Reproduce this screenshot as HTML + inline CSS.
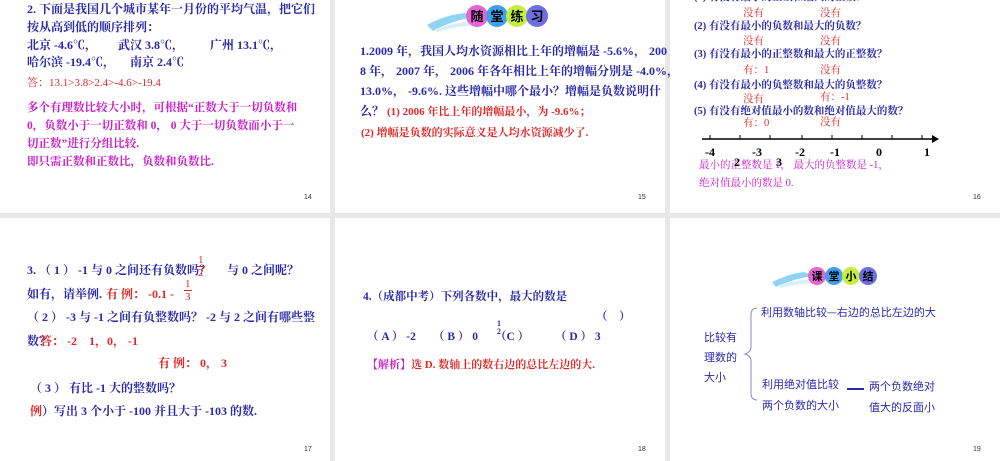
<!DOCTYPE html>
<html><head><meta charset="utf-8"><style>
body{margin:0;width:1000px;height:461px;background:#e8e8e8;position:relative;overflow:hidden;font-family:"Liberation Serif","Noto Serif CJK SC","Noto Sans CJK SC",serif}
.s{position:absolute;background:#fff}
.t{position:absolute;white-space:nowrap;font-size:12px;line-height:14px}
.b{color:#2a2aa8;font-weight:bold}.r{color:#e02828}.m{color:#c81ec8}
.n{position:absolute;font:7px "Liberation Sans",sans-serif;color:#333}
</style></head><body>
<div class="s" style="left:0;top:0;width:330px;height:213px"></div>
<div class="s" style="left:335px;top:0;width:330px;height:213px"></div>
<div class="s" style="left:670px;top:0;width:330px;height:213px"></div>
<div class="s" style="left:0;top:218px;width:330px;height:243px"></div>
<div class="s" style="left:335px;top:218px;width:330px;height:243px"></div>
<div class="s" style="left:670px;top:218px;width:330px;height:243px"></div>

<!-- slide 14 -->
<div class="t b" style="left:27px;top:2px">2. 下面是我国几个城市某年一月份的平均气温，把它们</div>
<div class="t b" style="left:27px;top:20px">按从高到低的顺序排列：</div>
<div class="t b" style="left:27px;top:38px">北京 -4.6℃，</div>
<div class="t b" style="left:118px;top:38px">武汉 3.8℃，</div>
<div class="t b" style="left:210px;top:38px">广州 13.1℃，</div>
<div class="t b" style="left:27px;top:55px">哈尔滨 -19.4℃，</div>
<div class="t b" style="left:130px;top:55px">南京 2.4℃</div>
<div class="t r" style="left:27px;top:76px;font-size:11px">答：13.1>3.8>2.4>-4.6>-19.4</div>
<div class="t m" style="left:27px;top:101px;font-size:11.5px;font-weight:bold">多个有理数比较大小时，可根据“正数大于一切负数和</div>
<div class="t m" style="left:27px;top:119px;font-size:11.5px;font-weight:bold">0，负数小于一切正数和 0， 0 大于一切负数而小于一</div>
<div class="t m" style="left:27px;top:137px;font-size:11.5px;font-weight:bold">切正数”进行分组比较.</div>
<div class="t m" style="left:27px;top:155px;font-size:11.5px;font-weight:bold">即只需正数和正数比，负数和负数比.</div>
<div class="n" style="left:304px;top:194px">14</div>

<!-- slide 15 -->
<svg style="position:absolute;left:425px;top:3px" width="140" height="30">
<path d="M2 22 Q20 12 40 10 L52 14 Q30 16 8 28Z" fill="#8fd4f0"/>
<path d="M10 26 Q35 18 55 18 L58 22 Q35 22 12 29Z" fill="#d8eef8"/>
<circle cx="52" cy="13" r="11" fill="#e565d5"/><circle cx="72" cy="13" r="11" fill="#3fa0ee"/>
<circle cx="92" cy="13" r="11" fill="#c6ee3c"/><circle cx="112" cy="13" r="11" fill="#6e6ee0"/>
<text x="52" y="18" font-size="13" font-weight="bold" text-anchor="middle" font-family="Noto Sans CJK SC">随</text>
<text x="72" y="18" font-size="13" font-weight="bold" text-anchor="middle" font-family="Noto Sans CJK SC">堂</text>
<text x="92" y="18" font-size="13" font-weight="bold" text-anchor="middle" font-family="Noto Sans CJK SC">练</text>
<text x="112" y="18" font-size="13" font-weight="bold" text-anchor="middle" font-family="Noto Sans CJK SC">习</text>
</svg>
<div class="t b" style="left:360px;top:44px">1.2009 年，我国人均水资源相比上年的增幅是 -5.6%， 200</div>
<div class="t b" style="left:360px;top:64px">8 年， 2007 年， 2006 年各年相比上年的增幅分别是 -4.0%，</div>
<div class="t b" style="left:360px;top:84px">13.0%， -9.6%. 这些增幅中哪个最小？增幅是负数说明什</div>
<div class="t b" style="left:360px;top:104px">么？ <span class="r" style="font-size:11px">(1) 2006 年比上年的增幅最小，为 -9.6%；</span></div>
<div class="t r" style="left:361px;top:126px;font-size:11px;font-weight:bold">(2) 增幅是负数的实际意义是人均水资源减少了.</div>
<div class="n" style="left:638px;top:194px">15</div>

<!-- slide 16 -->
<div class="t b" style="left:694px;top:-9px;font-size:10.5px">(1) 有没有最小的正数和最大的正数？</div>
<div class="t r" style="left:743px;top:7px;font-size:10.5px">没有</div><div class="t r" style="left:820px;top:7px;font-size:10.5px">没有</div>
<div class="t b" style="left:694px;top:20px;font-size:10.5px">(2) 有没有最小的负数和最大的负数？</div>
<div class="t r" style="left:743px;top:35px;font-size:10.5px">没有</div><div class="t r" style="left:820px;top:35px;font-size:10.5px">没有</div>
<div class="t b" style="left:694px;top:48px;font-size:10.5px">(3) 有没有最小的正整数和最大的正整数？</div>
<div class="t r" style="left:743px;top:64px;font-size:10.5px">有：1</div><div class="t r" style="left:820px;top:64px;font-size:10.5px">没有</div>
<div class="t b" style="left:694px;top:79px;font-size:10.5px">(4) 有没有最小的负整数和最大的负整数？</div>
<div class="t r" style="left:743px;top:93px;font-size:10.5px">没有</div><div class="t r" style="left:820px;top:91px;font-size:10.5px">有：-1</div>
<div class="t b" style="left:694px;top:105px;font-size:10.5px">(5) 有没有绝对值最小的数和绝对值最大的数？</div>
<div class="t r" style="left:743px;top:117px;font-size:10.5px">有：0</div><div class="t r" style="left:820px;top:116px;font-size:10.5px">没有</div>
<svg style="position:absolute;left:700px;top:132px" width="240" height="14">
<line x1="2" y1="7" x2="232" y2="7" stroke="#000" stroke-width="1.6"/>
<path d="M232 3 L239 7 L232 11Z" fill="#000"/>
<g stroke="#000" stroke-width="1"><line x1="10" y1="3" x2="10" y2="7"/><line x1="40" y1="3" x2="40" y2="7"/><line x1="70" y1="3" x2="70" y2="7"/><line x1="102" y1="3" x2="102" y2="7"/><line x1="132" y1="3" x2="132" y2="7"/><line x1="162" y1="3" x2="162" y2="7"/><line x1="192" y1="3" x2="192" y2="7"/><line x1="222" y1="3" x2="222" y2="7"/></g>
</svg>
<div class="t" style="left:705px;top:145px;font-weight:bold;font-size:12px">-4</div>
<div class="t" style="left:752px;top:145px;font-weight:bold;font-size:12px">-3</div>
<div class="t" style="left:795px;top:145px;font-weight:bold;font-size:12px">-2</div>
<div class="t" style="left:830px;top:145px;font-weight:bold;font-size:12px">-1</div>
<div class="t" style="left:876px;top:145px;font-weight:bold;font-size:12px">0</div>
<div class="t" style="left:924px;top:145px;font-weight:bold;font-size:12px">1</div>
<div class="t m" style="left:699px;top:159px;font-size:10.5px">最小的正整数是 1， 最大的负整数是 -1，</div>
<div class="t" style="left:734px;top:155px;font-size:12px;font-weight:bold">2</div>
<div class="t" style="left:776px;top:155px;font-size:12px;font-weight:bold">3</div>
<div class="t m" style="left:699px;top:177px;font-size:10.5px">绝对值最小的数是 0.</div>
<div class="n" style="left:973px;top:194px">16</div>

<!-- slide 17 -->
<div class="t b" style="left:27px;top:263px">3. （ 1 ） -1 与 0 之间还有负数吗？</div>
<div class="t r" style="left:198px;top:253px;font-size:11px">1</div>
<div style="position:absolute;left:197px;top:266px;width:8px;height:1px;background:#e02828"></div>
<div class="t r" style="left:198px;top:266px;font-size:11px">2</div>
<div class="t b" style="left:227px;top:263px">与 0 之间呢？</div>
<div class="t b" style="left:27px;top:287px">如有，请举例.</div>
<div class="t r" style="left:106px;top:287px;font-weight:bold">有 例： -0.1 -</div>
<div class="t r" style="left:185px;top:277px;font-size:11px">1</div>
<div style="position:absolute;left:184px;top:290px;width:8px;height:1px;background:#e02828"></div>
<div class="t r" style="left:185px;top:290px;font-size:11px">3</div>
<div class="t b" style="left:27px;top:310px">（ 2 ） -3 与 -1 之间有负整数吗？ -2 与 2 之间有哪些整</div>
<div class="t b" style="left:27px;top:334px">数？</div>
<div class="t r" style="left:40px;top:334px;font-weight:bold">答： -2 &nbsp;&nbsp;&nbsp;1，0， -1</div>
<div class="t r" style="left:158px;top:356px;font-weight:bold">有 例： 0， 3</div>
<div class="t b" style="left:30px;top:381px">（ 3 ） 有比 -1 大的整数吗？</div>
<div class="t b" style="left:30px;top:404px"><span class="r">例</span>）写出 3 个小于 -100 并且大于 -103 的数.</div>
<div class="n" style="left:304px;top:446px">17</div>

<!-- slide 18 -->
<div class="t b" style="left:363px;top:290px;font-size:11.5px">4.（成都中考）下列各数中，最大的数是</div>
<div class="t b" style="left:596px;top:310px;font-size:11.5px">（ &nbsp;&nbsp;&nbsp;）</div>
<div class="t b" style="left:367px;top:330px;font-size:11.5px">（ A ） -2</div>
<div class="t b" style="left:433px;top:330px;font-size:11.5px">（ B ） 0</div>
<div class="t b" style="left:495px;top:330px;font-size:11.5px">（C ）</div>
<div class="t b" style="left:497px;top:320px;font-size:8px;line-height:8px">1<br>2</div>
<div class="t b" style="left:555px;top:330px;font-size:11.5px">（ D ） 3</div>
<div class="t r" style="left:367px;top:358px;font-size:11px;font-weight:bold"><span class="m">【解析】</span>选 D. 数轴上的数右边的总比左边的大.</div>
<div class="n" style="left:638px;top:446px">18</div>

<!-- slide 19 -->
<svg style="position:absolute;left:770px;top:264px" width="120" height="24">
<path d="M2 18 Q18 10 34 8 L44 12 Q25 14 6 23Z" fill="#8fd4f0"/>
<path d="M8 21 Q30 15 48 15 L50 19 Q30 19 10 24Z" fill="#d8eef8"/>
<circle cx="47" cy="12" r="9" fill="#e565d5"/><circle cx="64" cy="12" r="9" fill="#3fa0ee"/>
<circle cx="81" cy="12" r="9" fill="#c6ee3c"/><circle cx="98" cy="12" r="9" fill="#6e6ee0"/>
<text x="47" y="16" font-size="11" font-weight="bold" text-anchor="middle" font-family="Noto Sans CJK SC">课</text>
<text x="64" y="16" font-size="11" font-weight="bold" text-anchor="middle" font-family="Noto Sans CJK SC">堂</text>
<text x="81" y="16" font-size="11" font-weight="bold" text-anchor="middle" font-family="Noto Sans CJK SC">小</text>
<text x="98" y="16" font-size="11" font-weight="bold" text-anchor="middle" font-family="Noto Sans CJK SC">结</text>
</svg>
<div class="t b" style="left:761px;top:305px;font-family:'Noto Sans CJK SC',sans-serif;font-size:11px;font-weight:normal">利用数轴比较—右边的总比左边的大</div>
<div class="t b" style="left:704px;top:327px;font-family:'Noto Sans CJK SC',sans-serif;font-size:11px;line-height:20px;font-weight:normal">比较有<br>理数的<br>大小</div>
<svg style="position:absolute;left:743px;top:307px" width="16" height="95"><path d="M14 1 Q8 1 8 8 L8 40 Q8 45 2 47 Q8 49 8 54 L8 86 Q8 93 14 93" fill="none" stroke="#8a8ac8" stroke-width="1"/></svg>
<div class="t b" style="left:762px;top:374px;font-family:'Noto Sans CJK SC',sans-serif;font-size:11px;line-height:21px;font-weight:normal">利用绝对值比较<br>两个负数的大小</div>
<div style="position:absolute;left:847px;top:388px;width:17px;height:2px;background:#2a2aa8"></div>
<div class="t b" style="left:869px;top:376px;font-family:'Noto Sans CJK SC',sans-serif;font-size:11px;line-height:21px;font-weight:normal">两个负数绝对<br>值大的反面小</div>
<div class="n" style="left:973px;top:446px">19</div>
</body></html>
